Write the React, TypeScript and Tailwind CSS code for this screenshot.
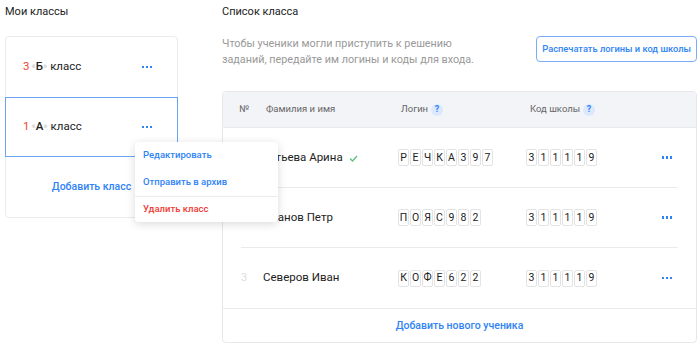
import React from "react";

const font = { fontFamily: "Roboto, 'Noto Sans', sans-serif" };

const Dots = () => (
  <div className="flex items-center gap-[1.5px]">
    <span className="w-[2.5px] h-[2.5px] bg-[#3083f5]" />
    <span className="w-[2.5px] h-[2.5px] bg-[#3083f5]" />
    <span className="w-[2.5px] h-[2.5px] bg-[#3083f5]" />
  </div>
);

const Help = () => (
  <span className="ml-[3px] w-[12px] h-[12px] rounded-full bg-[#dce9fc] text-[#3083f5] text-[9px] font-bold flex items-center justify-center leading-none">
    ?
  </span>
);

const Chars = ({ text }: { text: string }) => (
  <div className="flex gap-px">
    {text.split("").map((c, i) => (
      <span
        key={i}
        className="w-[11px] h-[17px] border border-[#e3e3e3] rounded-[2px] flex items-center justify-center text-[10.5px] text-[#222]"
      >
        {c}
      </span>
    ))}
  </div>
);

const students = [
  { n: 1, name: "Кутьева Арина", login: "РЕЧКА397", ok: true },
  { n: 2, name: "Иванов Петр", login: "ПОЯС982", ok: false },
  { n: 3, name: "Северов Иван", login: "КОФЕ622", ok: false },
];

function ClassRow({ num, letter, active }: { num: string; letter: string; active?: boolean }) {
  return (
    <div
      className={`h-[60px] flex items-center justify-between pl-[17px] pr-[25px] ${
        active ? "border border-[#6aa3f2] -mx-px" : ""
      }`}
    >
      <div className="flex items-center text-[11.5px] text-[#222]">
        <span className="text-[#f2452e]">{num}</span>
        <span className="text-[#c4c4c4] text-[9px] ml-[2px]">«</span>
        <span className="font-medium">{letter}</span>
        <span className="text-[#c4c4c4] text-[9px]">»</span>
        <span className="ml-[3px]">класс</span>
      </div>
      <Dots />
    </div>
  );
}

export default function App() {
  return (
    <div className="w-[700px] h-[347px] bg-white flex pl-[5px] pt-[3px] overflow-hidden" style={font}>
      {/* left */}
      <div className="w-[173px] shrink-0">
        <h2 className="text-[11px] text-[#222] h-[17px] leading-[17px]">Мои классы</h2>
        <div className="relative mt-[16px]">
          <div className="border border-[#ebebeb] rounded-[4px] bg-white">
            <ClassRow num="3" letter="Б" />
            <ClassRow num="1" letter="А" active />
            <div className="h-[60px] flex items-center justify-center text-[10.5px] font-medium text-[#3083f5]">
              Добавить класс
            </div>
          </div>

          <div className="absolute left-[130px] top-[106px] w-[143px] bg-white rounded-[4px] shadow-[0_2px_10px_rgba(0,0,0,0.15)] text-[9.5px] font-medium z-10">
            <div className="h-[27px] flex items-center pl-[8px] text-[#3083f5]">Редактировать</div>
            <div className="h-[27px] flex items-center pl-[8px] text-[#3083f5]">Отправить в архив</div>
            <div className="h-[26px] flex items-center pl-[8px] text-[#ee3b34] border-t border-[#ececec]">
              Удалить класс
            </div>
          </div>
        </div>
      </div>

      {/* right */}
      <div className="ml-[44px] w-[475px] shrink-0">
        <h2 className="text-[11px] text-[#222] h-[17px] leading-[17px]">Список класса</h2>
        <div className="flex justify-between items-start mt-[16px]">
          <p className="text-[10.8px] leading-[16px] text-[#999] whitespace-nowrap">
            Чтобы ученики могли приступить к решению
            <br />
            заданий, передайте им логины и коды для входа.
          </p>
          <button className="h-[26px] px-[5px] border border-[#7aadf5] rounded-[4px] text-[9.3px] font-medium text-[#3083f5] whitespace-nowrap">
            Распечатать логины и код школы
          </button>
        </div>

        <div className="mt-[23px] border border-[#e8e8e8] rounded-[4px] overflow-hidden">
          <div className="h-[36px] bg-[#f2f4f8] flex items-center pl-[16px] text-[9.5px] text-[#666] border-b border-[#e8eaee]">
            <span className="w-[27px]">№</span>
            <span className="w-[135px]">Фамилия и имя</span>
            <span className="w-[129px] flex items-center">
              Логин <Help />
            </span>
            <span className="flex items-center">
              Код школы <Help />
            </span>
          </div>

          {students.map((s, i) => (
            <div key={s.n} className="px-[18px]">
              <div
                className={`h-[60px] flex items-center ${i < students.length - 1 ? "border-b border-[#ebebeb]" : ""}`}
              >
                <span className="w-[22px] text-[11px] text-[#ddd]">{s.n}</span>
                <span className="w-[135px] text-[11.5px] text-[#222] flex items-center">
                  {s.name}
                  {s.ok && (
                    <svg width="9" height="7" viewBox="0 0 9 7" className="ml-[6px] mt-[2px]">
                      <path d="M1 3.5 L3.5 6 L8 1" fill="none" stroke="#5cc27a" strokeWidth="1.3" />
                    </svg>
                  )}
                </span>
                <span className="w-[128px]">
                  <Chars text={s.login} />
                </span>
                <Chars text="311119" />
                <div className="ml-auto mr-[6px]">
                  <Dots />
                </div>
              </div>
            </div>
          ))}

          <div className="h-[34px] border-t border-[#ebebeb] flex items-center justify-center text-[10.5px] font-medium text-[#3083f5]">
            Добавить нового ученика
          </div>
        </div>
      </div>
    </div>
  );
}
